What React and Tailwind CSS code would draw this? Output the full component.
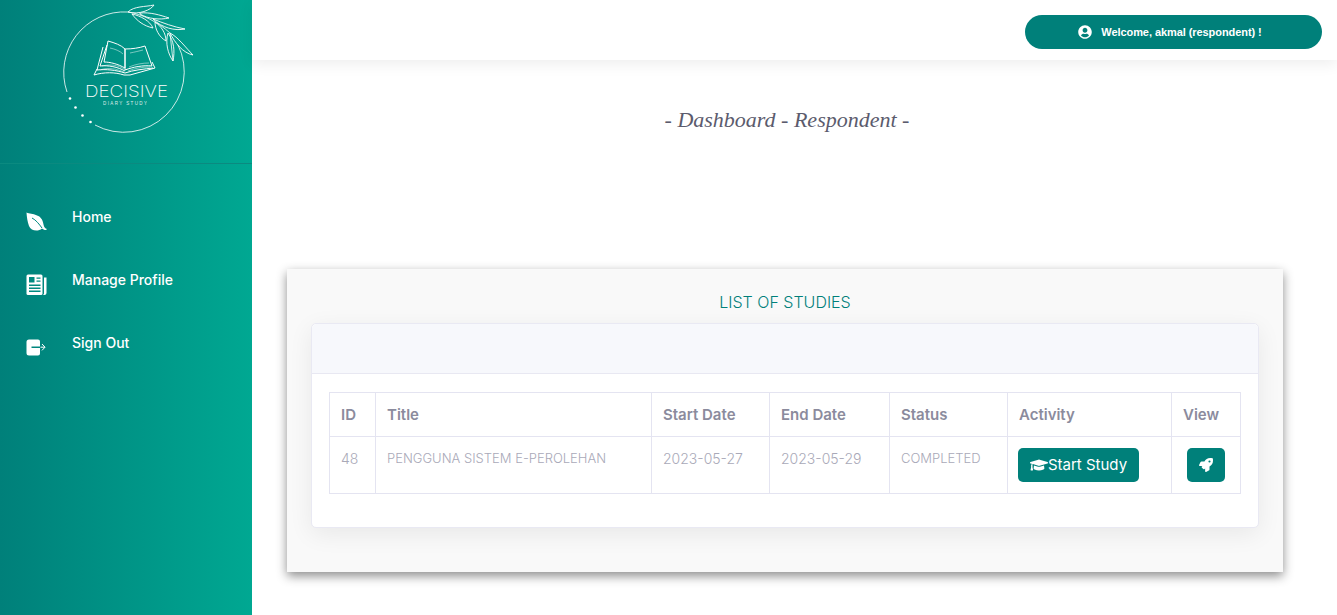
import React from "react";
import { FaUserCircle, FaGraduationCap, FaRocket } from "react-icons/fa";

function Logo() {
  const leaves = [
    "M128 12 C134 6 145 7 154 5 C151 10 139 15 128 12 Z",
    "M140 13 C150 12 160 15 169 18 C160 20 148 19 140 14 Z",
    "M132 14 C137 21 144 26 153 28 C150 21 141 16 132 14 Z",
    "M153 19 C163 23 174 27 185 29 C175 31 162 28 153 19 Z",
    "M155 22 C155 29 159 37 166 41 C166 33 161 26 155 22 Z",
    "M170 33 C178 37 186 48 193 55 C183 53 175 43 170 33 Z",
    "M168 33 C165 43 168 54 173 61 C175 51 174 41 168 33 Z",
  ];
  return (
    <svg width="252" height="163" viewBox="0 0 252 163" className="block">
      <path d="M67 92 A60.5 60.5 0 0 1 128 12" fill="none" stroke="#fff" strokeWidth="0.8" />
      <path d="M178 45 A60.5 60.5 0 0 1 95 125" fill="none" stroke="#fff" strokeWidth="0.8" />
      {[[70, 98.5], [75.5, 107.5], [82.5, 115.5], [90.5, 122]].map(([cx, cy]) => (
        <circle key={cx} cx={cx} cy={cy} r="1.3" fill="#fff" />
      ))}
      <path d="M128 12 C142 14 158 22 170 33 L173 61" stroke="#fff" strokeWidth="0.8" fill="none" />
      {leaves.map((d) => (
        <path key={d} d={d} fill="none" stroke="#fff" strokeWidth="0.9" />
      ))}
      <g fill="none" stroke="#fff" strokeWidth="1">
        <path d="M108 41 C115 43 121 45 125 49 L125 68 C118 64 110 62 104 62 Z" />
        <path d="M125 49 C132 49 139 48 145 46 L152 66 C143 65 133 67 125 70 Z" />
        <path d="M103 47 L97 70 C106 69 116 70 125 73 C133 70 145 69 153 68" />
        <path d="M107 45 L100 66 C108 65 118 67 125 71" />
        <path d="M94 75 L97 69 M94 75 C104 72 115 72 124 75 L130 75 L155 68 L152 62" />
      </g>
      <g fill="none" stroke="#fff" strokeWidth="0.6" opacity="0.8">
        <path d="M100 70 C108 67 117 69 124 72 M128 71 C135 68 143 67 150 67 M102 66 C110 64 118 65 124 69 M129 67 C136 64 143 63 149 63 M110 48 C115 49 120 51 123 54 M130 53 C135 52 139 51 143 50" />
      </g>
      <text x="85" y="97" fontFamily="Inter, sans-serif" fontSize="16.5" fontWeight="200" fill="#fff" textLength="83" lengthAdjust="spacingAndGlyphs">DECISIVE</text>
      <text x="103" y="105" fontFamily="'Liberation Sans', sans-serif" fontSize="4.5" fill="#fff" opacity="0.85" textLength="44">DIARY STUDY</text>
    </svg>
  );
}

function LeafIcon() {
  return (
    <svg width="21" height="19" viewBox="0 0 21 19">
      <path d="M0.5 0.5 C6 3 16 1 17.5 12.5 C18 15 19 16.5 21 17 L20 18 C18 18 17 17.3 16 16.5 C12 20 5 19 3 14 C1.5 10 0.8 5 0.5 0.5 Z" fill="#fff" />
      <path d="M6 6 C10 8 13 12 16 16" stroke="#008a80" strokeWidth="1" fill="none" />
    </svg>
  );
}

function PaperIcon() {
  return (
    <svg width="21" height="21" viewBox="0 0 21 21">
      <rect x="0.5" y="0.5" width="16" height="20.5" rx="1.5" fill="#fff" />
      <path d="M18 3.5 H20.5 V19 A2 2 0 0 1 18.5 21 H17 C17.7 20.5 18 20 18 19 Z" fill="#fff" />
      <path d="M3 3 H8.5 V8.5 H3 Z M10.5 3.5 H14.5 V4.7 H10.5 Z M10.5 6.5 H14.5 V7.7 H10.5 Z M3 10.5 H14.5 V11.9 H3 Z M3 13.5 H14.5 V14.9 H3 Z M3 16.5 H14.5 V17.9 H3 Z" fill="#008a80" />
    </svg>
  );
}

function SignOutIcon() {
  return (
    <svg width="20" height="17" viewBox="0 0 20 17" fill="none">
      <path d="M3 0.5 H12 A2 2 0 0 1 14 2.5 V7.5 H5.5 V9 H14 V14.5 A2 2 0 0 1 12 16.5 H3 A2.5 2.5 0 0 1 0.5 14 V3 A2.5 2.5 0 0 1 3 0.5 Z" fill="#fff" />
      <path d="M14.5 8.2 H19 M16 5 L19 8.2 L16 11.4" stroke="#fff" strokeWidth="1" />
    </svg>
  );
}

function NavItem({ icon, label }) {
  return (
    <a className="flex h-[63px] pl-[26px] items-start text-white">
      <span className="w-[46px] h-[21px] mt-[4px] flex items-center">{icon}</span>
      <span className="text-[14px] leading-[20px] font-medium">{label}</span>
    </a>
  );
}

const headers = ["ID", "Title", "Start Date", "End Date", "Status", "Activity", "View"];
const widths = ["w-[46px]", "w-[276px]", "w-[118px]", "w-[120px]", "w-[118px]", "w-[164px]", "w-[69px]"];

export default function App() {
  const body = "border border-[#e4e4f1] px-[11px] pt-[11px] pb-[24px] align-top leading-[21px] font-light text-[#a9a9b8]";
  return (
    <div className="flex h-[615px] w-[1337px] overflow-hidden bg-white font-['Inter','Liberation_Sans',sans-serif]">
      <aside className="w-[252px] shrink-0 bg-gradient-to-r from-[#00807a] to-[#00a892]">
        <div className="h-[164px] border-b border-[#0b8a80]">
          <Logo />
        </div>
        <nav className="pt-[43px]">
          <NavItem icon={<LeafIcon />} label="Home" />
          <NavItem icon={<PaperIcon />} label="Manage Profile" />
          <NavItem icon={<SignOutIcon />} label="Sign Out" />
        </nav>
      </aside>
      <main className="flex-1 min-w-0">
        <header className="relative h-[60px] bg-white flex items-start justify-end pt-[15px] pr-[15px] shadow-[0_4px_14px_rgba(0,0,0,0.07)]">
          <div className="w-[297px] h-[34px] rounded-full bg-[#00807a] text-white flex items-center justify-center gap-[9px] pr-[7px] font-['Liberation_Sans',sans-serif] text-[11px] font-bold tracking-[-0.07px]">
            <FaUserCircle className="text-[14px]" />
            <span>Welcome, akmal (respondent) !</span>
          </div>
        </header>
        <h1 className="mt-[44px] pr-[15px] text-center text-[22px] leading-[32px] italic text-[#5b5b6d] font-['Liberation_Serif',serif]">
          - Dashboard - Respondent -
        </h1>
        <section className="mt-[133px] ml-[35px] w-[996px] h-[303px] bg-[#f9f9f9] px-[24px] shadow-[0_4px_10px_rgba(0,0,0,0.45)]">
          <h2 className="pt-[21px] h-[54px] text-center text-[16px] leading-[24px] font-light text-[#00807a]">LIST OF STUDIES</h2>
          <div className="h-[205px] bg-white rounded-[5px] border border-[#e9e9f3] shadow-[0_6px_24px_rgba(0,0,0,0.07)]">
            <div className="h-[50px] bg-[#f7f8fc] border-b border-[#e8e8f2] rounded-t-[5px]" />
            <div className="px-[17px] pt-[18px]">
              <table className="w-[911px] table-fixed border-collapse">
                <colgroup>
                  {widths.map((w, i) => (
                    <col key={i} className={w} />
                  ))}
                </colgroup>
                <thead>
                  <tr className="h-[44px]">
                    {headers.map((h) => (
                      <th key={h} className="border border-[#e4e4f1] px-[11px] text-left text-[15px] leading-[20px] font-semibold text-[#8b8b9d]">{h}</th>
                    ))}
                  </tr>
                </thead>
                <tbody>
                  <tr className="h-[57px]">
                    <td className={body + " text-[14px]"}>48</td>
                    <td className={body + " text-[13px] whitespace-nowrap"}>PENGGUNA SISTEM E-PEROLEHAN</td>
                    <td className={body + " text-[14px]"}>2023-05-27</td>
                    <td className={body + " text-[14px]"}>2023-05-29</td>
                    <td className={body + " text-[13px]"}>COMPLETED</td>
                    <td className="border border-[#e4e4f1] px-[10px] align-middle">
                      <button className="flex w-[121px] h-[34px] items-center justify-center rounded-[5px] bg-[#00807a] text-white text-[15px]">
                        <FaGraduationCap className="text-[18px]" />
                        <span>Start Study</span>
                      </button>
                    </td>
                    <td className="border border-[#e4e4f1] align-middle">
                      <button className="mx-auto flex w-[38px] h-[34px] items-center justify-center rounded-[5px] bg-[#00807a] text-white text-[14px]">
                        <FaRocket />
                      </button>
                    </td>
                  </tr>
                </tbody>
              </table>
            </div>
          </div>
        </section>
      </main>
    </div>
  );
}
